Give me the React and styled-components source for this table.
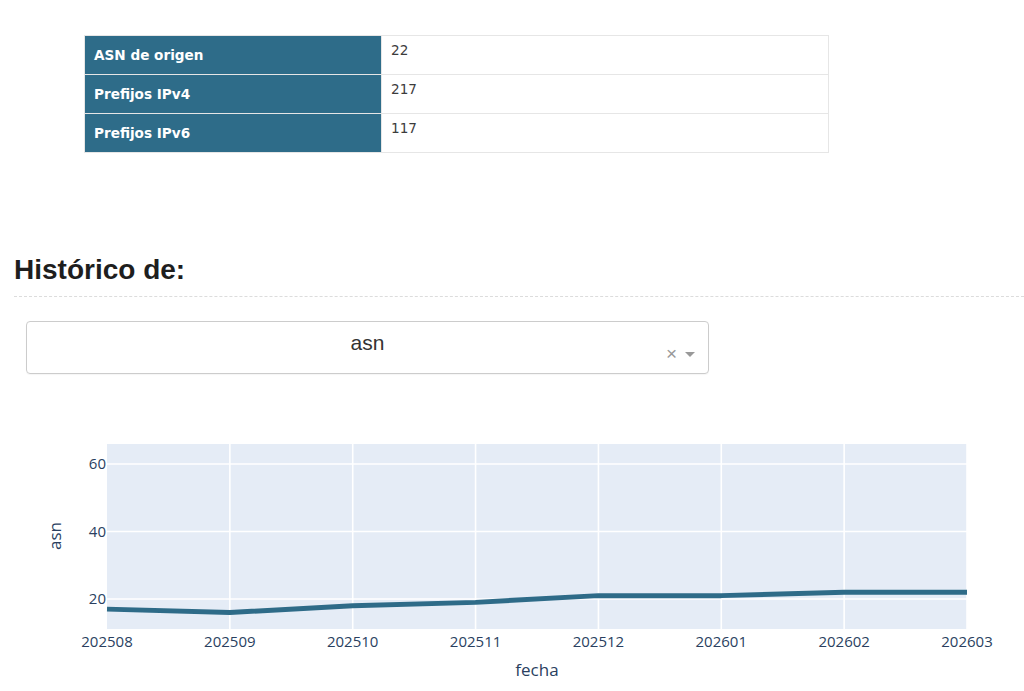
import React from 'react';
import styled, { createGlobalStyle } from 'styled-components';

const summary = [
  { label: 'ASN de origen', value: '22' },
  { label: 'Prefijos IPv4', value: '217' },
  { label: 'Prefijos IPv6', value: '117' },
];

const history = [
  { fecha: '202508', asn: 17 },
  { fecha: '202509', asn: 16 },
  { fecha: '202510', asn: 18 },
  { fecha: '202511', asn: 19 },
  { fecha: '202512', asn: 21 },
  { fecha: '202601', asn: 21 },
  { fecha: '202602', asn: 22 },
  { fecha: '202603', asn: 22 },
];

// plot area in svg coordinates
const PLOT = { left: 107, right: 967, top: 23, bottom: 208 };
const yPos = (v) => 178 - (v - 20) * 3.375;
const xPos = (i) => PLOT.left + (i * (PLOT.right - PLOT.left)) / (history.length - 1);

export default function App() {
  const linePoints = history.map((d, i) => `${xPos(i)},${yPos(d.asn)}`).join(' ');

  return (
    <Page>
      <GlobalStyle />
      <SummaryTable>
        <tbody>
          {summary.map((row) => (
            <tr key={row.label}>
              <LabelCell>{row.label}</LabelCell>
              <ValueCell>{row.value}</ValueCell>
            </tr>
          ))}
        </tbody>
      </SummaryTable>

      <Heading>Histórico de:</Heading>
      <Divider />

      <Dropdown>
        <SelectedValue>asn</SelectedValue>
        <Controls>
          <ClearIcon>×</ClearIcon>
          <Caret />
        </Controls>
      </Dropdown>

      <Chart width="1024" height="271" viewBox="0 0 1024 271">
        <rect
          x={PLOT.left}
          y={PLOT.top}
          width={PLOT.right - PLOT.left}
          height={PLOT.bottom - PLOT.top}
          fill="#e5ecf6"
        />
        {history.map((d, i) =>
          i === 0 ? null : (
            <line key={d.fecha} x1={xPos(i)} x2={xPos(i)} y1={PLOT.top} y2={PLOT.bottom} stroke="#fff" strokeWidth="1.6" />
          )
        )}
        {[20, 40, 60].map((v) => (
          <line key={v} x1={PLOT.left} x2={PLOT.right} y1={yPos(v)} y2={yPos(v)} stroke="#fff" strokeWidth="1.6" />
        ))}
        <polyline points={linePoints} fill="none" stroke="#2e6b88" strokeWidth="5" strokeLinejoin="round" />

        {[20, 40, 60].map((v) => (
          <TickText key={v} x="106" y={yPos(v) + 5} textAnchor="end">
            {v}
          </TickText>
        ))}
        {history.map((d, i) => (
          <TickText key={d.fecha} x={xPos(i)} y="226" textAnchor="middle">
            {d.fecha}
          </TickText>
        ))}
        <AxisTitle x="537" y="255" textAnchor="middle">
          fecha
        </AxisTitle>
        <AxisTitle x="61" y="115" textAnchor="middle" transform="rotate(-90 61 115)">
          asn
        </AxisTitle>
      </Chart>
    </Page>
  );
}

const GlobalStyle = createGlobalStyle`
  body {
    margin: 0;
    background: #ffffff;
    font-family: "Liberation Sans", Arial, sans-serif;
  }
`;

const Page = styled.div`
  width: 1024px;
  height: 691px;
  overflow: hidden;
  padding-top: 35px;
  box-sizing: border-box;
`;

const SummaryTable = styled.table`
  margin-left: 84px;
  width: 745px;
  border-collapse: collapse;
  font-family: "DejaVu Sans", Verdana, sans-serif;
`;

const LabelCell = styled.td`
  width: 297px;
  height: 39px;
  box-sizing: border-box;
  padding: 0 9px;
  background: #2e6c89;
  color: #ffffff;
  font-weight: bold;
  font-size: 13.6px;
  border: 1px solid #e6e6e6;
  vertical-align: middle;
`;

const ValueCell = styled.td`
  padding: 6px 9px 0;
  font-size: 13.6px;
  color: #3c3c3c;
  border: 1px solid #e6e6e6;
  vertical-align: top;
`;

const Heading = styled.h2`
  margin: 101px 0 0 14px;
  font-size: 28px;
  line-height: 32px;
  font-weight: bold;
  color: #1e1e1e;
`;

const Divider = styled.div`
  margin: 10px 0 0 14px;
  border-top: 1px dashed #dcdcdc;
`;

const Dropdown = styled.div`
  position: relative;
  margin: 24px 0 0 26px;
  width: 683px;
  height: 53px;
  box-sizing: border-box;
  border: 1px solid #cccccc;
  border-radius: 4px;
  box-shadow: 0 1px 1px rgba(0, 0, 0, 0.04);
  display: flex;
  justify-content: center;
`;

const SelectedValue = styled.span`
  margin-top: 9px;
  font-size: 21px;
  line-height: 24px;
  color: #333333;
`;

const Controls = styled.div`
  position: absolute;
  right: 13px;
  bottom: 10px;
  display: flex;
  align-items: center;
  gap: 8px;
`;

const ClearIcon = styled.span`
  font-size: 19px;
  line-height: 18px;
  color: #999999;
`;

const Caret = styled.span`
  width: 0;
  height: 0;
  border-left: 5px solid transparent;
  border-right: 5px solid transparent;
  border-top: 5px solid #999999;
`;

const Chart = styled.svg`
  display: block;
  margin-top: 47px;
`;

const TickText = styled.text`
  font-family: "Open Sans", sans-serif;
  font-size: 15px;
  fill: #2a3f5f;
`;

const AxisTitle = styled.text`
  font-family: "Open Sans", sans-serif;
  font-size: 17px;
  fill: #2a3f5f;
`;
